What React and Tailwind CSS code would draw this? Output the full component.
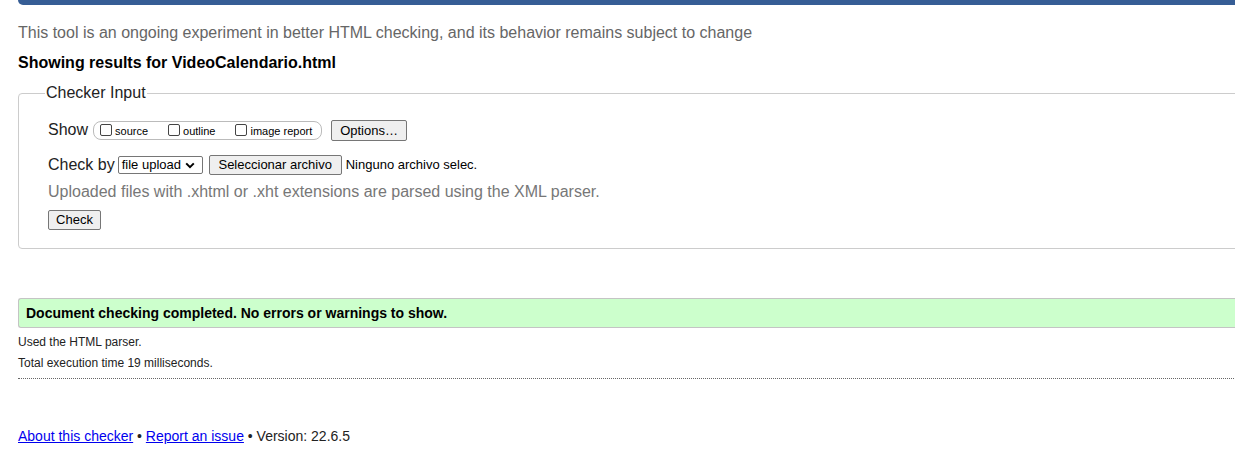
export default function App() {
  return (
    <div className="w-screen overflow-hidden bg-white text-black font-['Liberation_Sans',Arial,sans-serif]">
      <div className="w-[1400px] pl-[18px]">
        <div className="h-[5px] rounded-bl-[5px] bg-[#365d95]" />

        <p className="mt-[19px] text-[16px] leading-[18px] text-[#666]">
          This tool is an ongoing experiment in better HTML checking, and its behavior remains subject to change
        </p>
        <h2 className="mt-[12px] text-[16px] leading-[18px] font-bold">Showing results for VideoCalendario.html</h2>

        <fieldset className="mt-[12px] h-[165px] rounded-[4px] border border-[#ccc] px-[29px] pt-[16px]">
          <legend className="ml-[-3px] px-[1px] text-[16px] leading-[18px] text-[#222]">Checker Input</legend>

          <div className="flex items-center gap-[8px] text-[16px]">
            <span className="text-[#222]">Show</span>
            <div className="ml-[-3px] flex h-[19px] w-[229px] items-center rounded-[8px] border border-[#bbb] pl-[6px] text-[11px]">
              <label className="flex items-center">
                <span className="h-[12px] w-[12px] rounded-[2px] border border-[#444] bg-white" />
                <span className="ml-[3px] mt-[2px]">source</span>
              </label>
              <label className="ml-[20px] flex items-center">
                <span className="h-[12px] w-[12px] rounded-[2px] border border-[#444] bg-white" />
                <span className="ml-[3px] mt-[2px]">outline</span>
              </label>
              <label className="ml-[20px] flex items-center">
                <span className="h-[12px] w-[12px] rounded-[2px] border border-[#444] bg-white" />
                <span className="ml-[3px] mt-[2px]">image report</span>
              </label>
            </div>
            <button className="ml-[1px] h-[21px] w-[76px] rounded-[2px] border border-[#767676] bg-[#efefef] text-[13px] leading-[19px]">
              Options…
            </button>
          </div>

          <div className="mt-[11px] flex items-center text-[16px]">
            <span className="text-[#222]">Check by</span>
            <div className="ml-[3px] flex h-[18px] w-[85px] items-center rounded-[2px] border border-[#767676] bg-white pl-[3px] text-[13px]">
              <span>file upload</span>
              <svg className="ml-[4px]" width="10" height="7" viewBox="0 0 10 7">
                <path d="M1.2 1.4 L5 5.2 L8.8 1.4" fill="none" stroke="#000" strokeWidth="2" />
              </svg>
            </div>
            <button className="ml-[6px] h-[20px] w-[133px] rounded-[2px] border border-[#767676] bg-[#efefef] text-[13px] leading-[18px]">
              Seleccionar archivo
            </button>
            <span className="ml-[4px] text-[13px]">Ninguno archivo selec.</span>
          </div>

          <p className="mt-[6px] text-[16px] leading-[18px] text-[#777]">
            Uploaded files with .xhtml or .xht extensions are parsed using the XML parser.
          </p>

          <button className="mt-[9px] h-[20px] w-[53px] rounded-[2px] border border-[#767676] bg-[#efefef] text-[13px] leading-[18px]">
            Check
          </button>
        </fieldset>

        <div className="mt-[49px] h-[30px] rounded-l-[3px] border-y border-l border-[#c4c4c4] bg-[#ccffcc] pl-[7px] text-[14px] font-bold leading-[28px]">
          Document checking completed. No errors or warnings to show.
        </div>

        <p className="mt-[7px] text-[12px] leading-[14px] text-[#222]">Used the HTML parser.</p>
        <p className="mt-[7px] text-[12px] leading-[14px] text-[#222]">Total execution time 19 milliseconds.</p>
        <div className="mt-[8px] border-t border-dotted border-[#666]" />

        <div className="mt-[49px] text-[14px] leading-[16px] text-[#222]">
          <a href="#" className="text-[#00e] underline">About this checker</a>
          {' • '}
          <a href="#" className="text-[#00e] underline">Report an issue</a>
          {' • Version: 22.6.5'}
        </div>
        <div className="h-[12px]" />
      </div>
    </div>
  );
}
